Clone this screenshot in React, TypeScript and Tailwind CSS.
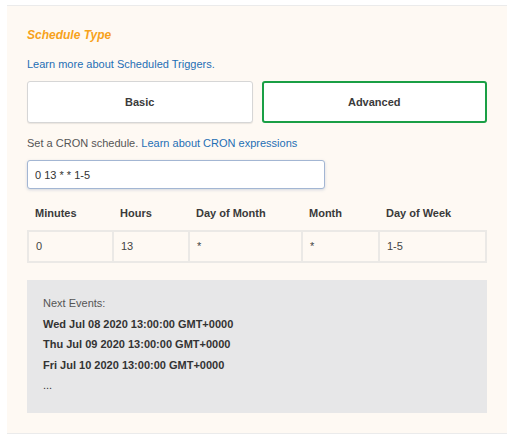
import React from 'react'

const columns = [
    { label: 'Minutes', value: '0' },
    { label: 'Hours', value: '13' },
    { label: 'Day of Month', value: '*' },
    { label: 'Month', value: '*' },
    { label: 'Day of Week', value: '1-5' },
]

const nextEvents = [
    'Wed Jul 08 2020 13:00:00 GMT+0000',
    'Thu Jul 09 2020 13:00:00 GMT+0000',
    'Fri Jul 10 2020 13:00:00 GMT+0000',
]

export default function App() {
    return (
        <div className="w-[512px] h-[440px] bg-white pt-[5px] font-['Liberation_Sans',Arial,sans-serif] text-[#333]">
            <div className="ml-[7px] w-[500px] bg-[#fef9f3] border-y border-[#ebebeb] px-5 pt-[21px] pb-[20px]">
                <h3 className="text-[12px] leading-[16px] font-bold italic text-[#f7a21b]">Schedule Type</h3>
                <a className="block mt-[14px] text-[11px] leading-[14px] text-[#1f6fb5]">
                    Learn more about Scheduled Triggers.
                </a>

                <div className="mt-[10px] grid grid-cols-2 gap-[9px]">
                    <button className="h-[42px] bg-white border border-[#d6d6d6] rounded-[3px] shadow-[0_1px_1px_rgba(0,0,0,0.08)] text-[11px] font-bold text-[#3a3a3a]">
                        Basic
                    </button>
                    <button className="h-[42px] bg-white border-2 border-[#1a9f45] rounded-[3px] text-[11px] font-bold text-[#3a3a3a]">
                        Advanced
                    </button>
                </div>

                <p className="mt-[13px] text-[11px] leading-[14px] text-[#555]">
                    Set a CRON schedule. <a className="text-[#1f6fb5]">Learn about CRON expressions</a>
                </p>

                <input
                    type="text"
                    defaultValue="0 13 * * 1-5"
                    className="mt-[10px] block w-[298px] h-[29px] px-[7px] bg-white border border-[#a3b6d3] rounded-[3px] shadow-[0_1px_3px_rgba(80,110,160,0.25)] text-[11px] text-[#333] outline-none"
                />

                <div className="mt-[8px] grid grid-cols-[85px_76px_113px_77px_109px]">
                    {columns.map((c) => (
                        <div key={c.label} className="h-[33px] flex items-center px-[8px] text-[11px] font-bold text-[#3a3a3a]">
                            {c.label}
                        </div>
                    ))}
                </div>
                <div className="grid grid-cols-[85px_76px_113px_77px_109px] border-2 border-[#ebe9e6] divide-x-2 divide-[#ebe9e6]">
                    {columns.map((c) => (
                        <div key={c.label} className="h-[29px] flex items-center px-[7px] text-[11px] text-[#444]">
                            {c.value}
                        </div>
                    ))}
                </div>

                <div className="mt-[17px] h-[133px] bg-[#e7e7e8] px-4 pt-[13px] text-[11px] leading-[20.5px]">
                    <div className="text-[#555]">Next Events:</div>
                    {nextEvents.map((e) => (
                        <div key={e} className="font-bold text-[#333]">{e}</div>
                    ))}
                    <div className="text-[#333]">...</div>
                </div>
            </div>
        </div>
    )
}
